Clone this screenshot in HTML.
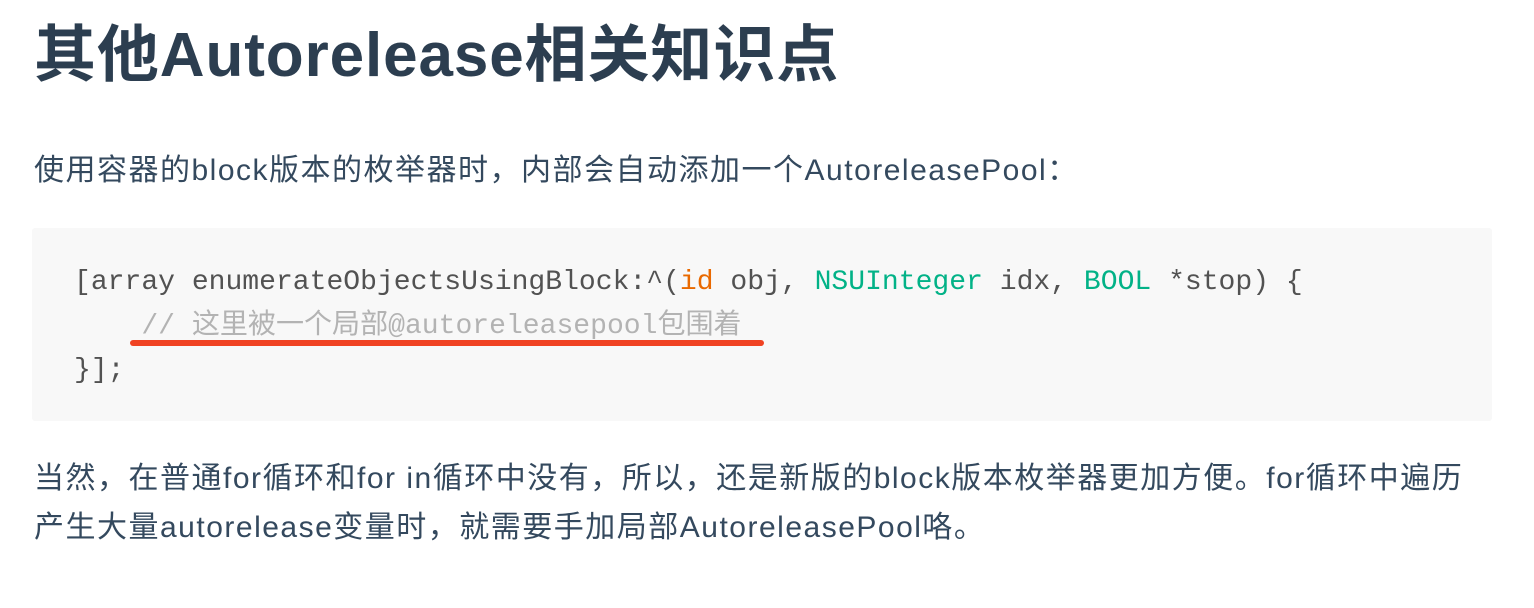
<!DOCTYPE html>
<html><head><meta charset="utf-8"><style>
body{margin:0;background:#fff;width:1534px;height:608px;overflow:hidden;color:#34495e;font-family:"Liberation Sans","Noto Sans CJK SC",sans-serif;}
.h{position:absolute;left:34px;top:17px;font-size:62px;font-weight:bold;line-height:78px;white-space:nowrap;color:#2c3e50;letter-spacing:0.9px;}
.p{position:absolute;left:34px;font-size:30px;letter-spacing:1.5px;line-height:49px;white-space:nowrap;}
.code{position:absolute;left:32px;top:228px;width:1460px;height:193px;background:#f8f8f8;border-radius:3px;}
.c{position:absolute;left:74px;top:261px;font-family:"Liberation Mono","Noto Sans CJK SC",monospace;font-size:28.05px;line-height:44px;white-space:pre;color:#525252;}
.k{color:#e96900}.t{color:#02b287}.cm{color:#b3b3b3}
.ul{position:absolute;left:130px;top:340px;width:634px;height:6px;background:#f04323;border-radius:3px;}
</style></head><body>
<div class="h">其他Autorelease相关知识点</div>
<div class="p" style="top:146px">使用容器的block版本的枚举器时，内部会自动添加一个AutoreleasePool：</div>
<div class="code"></div>
<div class="c">[array enumerateObjectsUsingBlock:^(<span class="k">id</span> obj, <span class="t">NSUInteger</span> idx, <span class="t">BOOL</span> *stop) {
    <span class="cm">// 这里被一个局部@autoreleasepool包围着</span>
}];</div>
<div class="ul"></div>
<div class="p" style="top:454px">当然，在普通for循环和for in循环中没有，所以，还是新版的block版本枚举器更加方便。for循环中遍历<br>产生大量autorelease变量时，就需要手加局部AutoreleasePool咯。</div>
</body></html>
